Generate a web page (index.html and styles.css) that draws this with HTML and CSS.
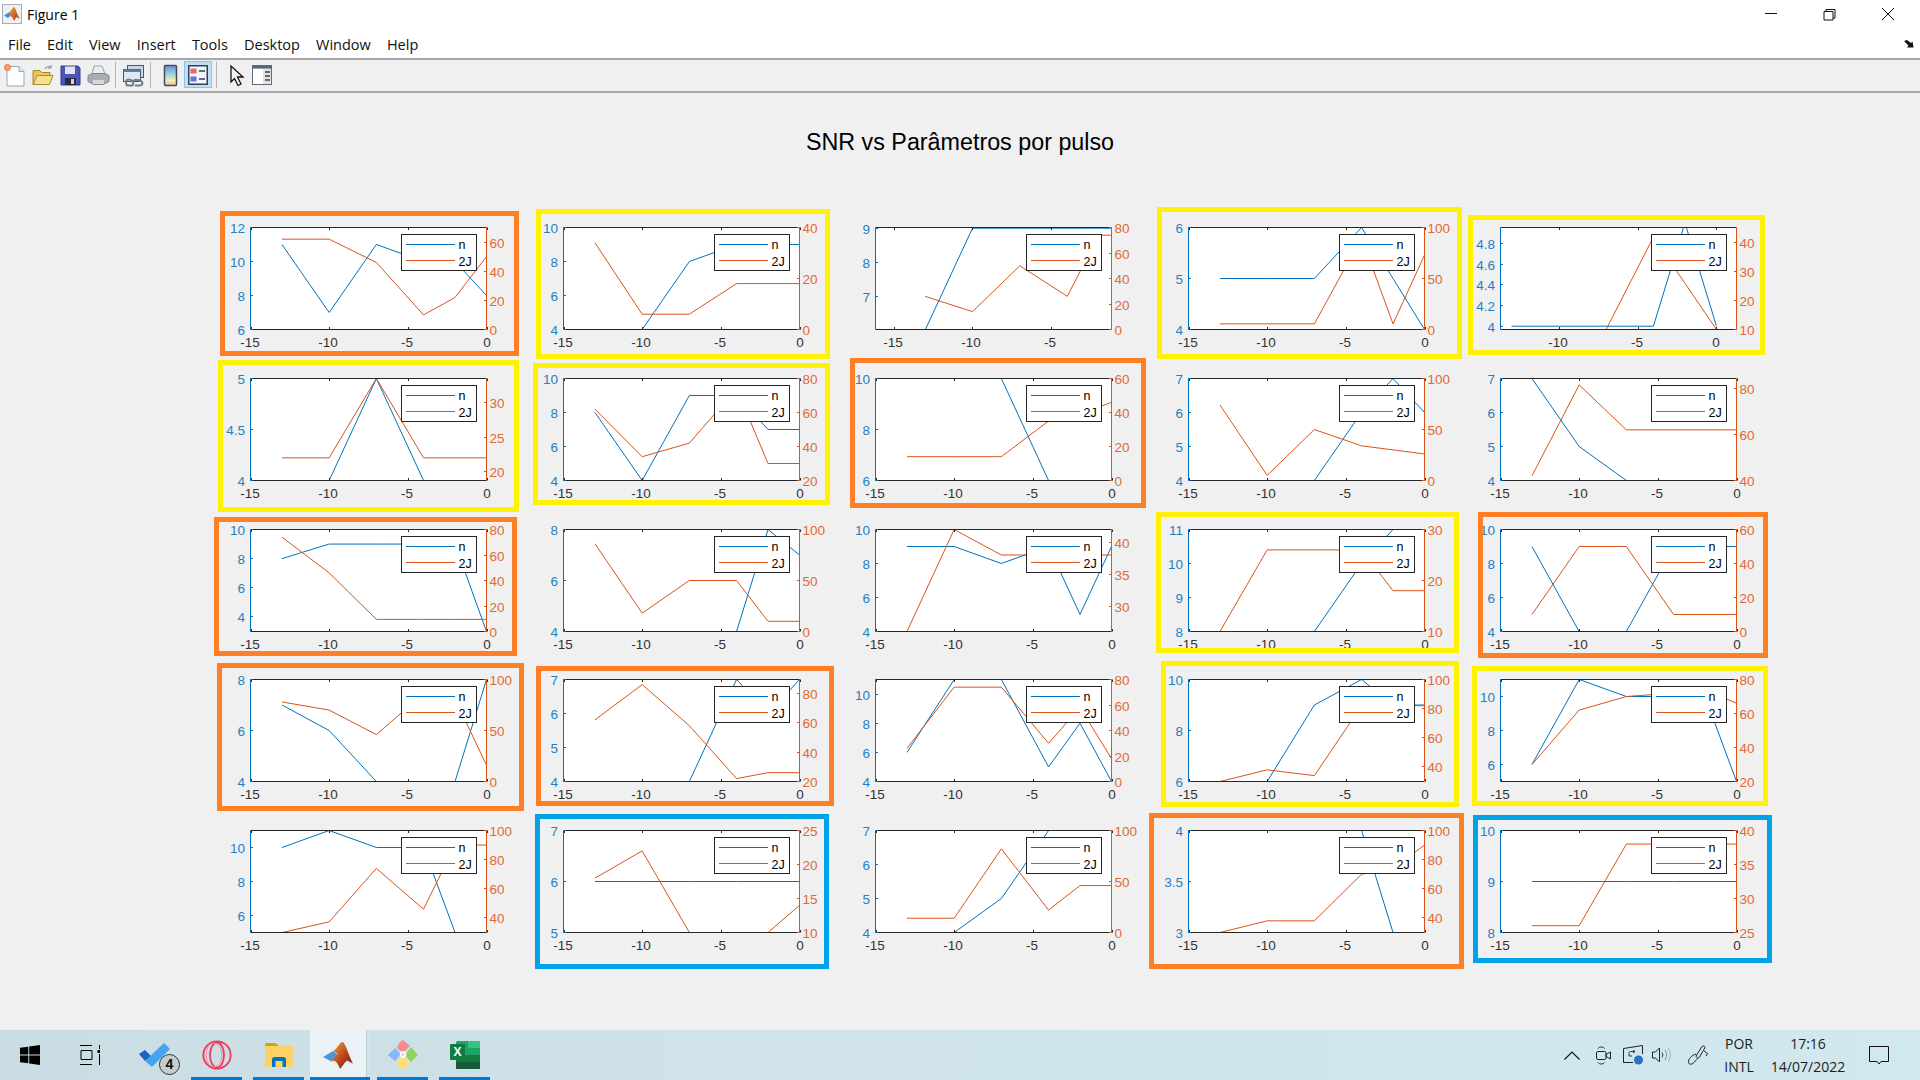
FILE: index.html
```html
<!DOCTYPE html>
<html lang="pt">
<head>
<meta charset="utf-8">
<title>Figure 1</title>
<link rel="stylesheet" href="styles.css">
</head>
<body>
<div class="window">
  <header class="titlebar">
    <svg class="app-icon" width="20" height="20" viewBox="0 0 20 20">
      <defs><linearGradient id="mlA" x1="0" y1="0" x2="1" y2="1"><stop offset="0" stop-color="#f6a13a"/><stop offset="1" stop-color="#a52a12"/></linearGradient></defs>
      <rect x=".5" y=".5" width="19" height="19" fill="#eef1f4" stroke="#a9adb2"/>
      <path d="M2 11.500 7.500 8 10 10 6 14Z" fill="#3f8fcf"/>
      <path d="M7.500 8C9.500 7 10.500 3 12 3 13.500 3 15.500 12 18 15L14.500 13 12 17C11 14 9.500 11.500 7.500 12.500Z" fill="url(#mlA)"/>
    </svg>
    <span class="title-text">Figure 1</span>
    <div class="win-controls">
      <svg class="wc" width="58" height="30" viewBox="0 0 58 30"><path class="wc-line" d="M23 13.500H35"/></svg>
      <svg class="wc" width="58" height="30" viewBox="0 0 58 30"><path class="wc-line" d="M24 11.500h9v8.500h-9zM26 11.500V9.500h9v8.500h-2"/></svg>
      <svg class="wc" width="58" height="30" viewBox="0 0 58 30"><path class="wc-line" d="M24 8 36 20M36 8 24 20"/></svg>
    </div>
  </header>

  <nav class="menubar">
    <span class="menu-item">File</span>
    <span class="menu-item">Edit</span>
    <span class="menu-item">View</span>
    <span class="menu-item">Insert</span>
    <span class="menu-item">Tools</span>
    <span class="menu-item">Desktop</span>
    <span class="menu-item">Window</span>
    <span class="menu-item">Help</span>
    <svg class="dock-arrow" width="10" height="8" viewBox="0 0 10 8"><path d="M0 1 3 0 7 3 8.500 1.500 9.500 7.500 3 7.500 4.500 5.500Z" fill="#111"/></svg>
  </nav>

  <div class="toolbar">
    <svg class="tool" width="24" height="24" viewBox="0 0 24 24">
      <path d="M5 3.500H17L22 8.500V23H5Z" fill="#fff" stroke="#8fa7c4"/><path d="M17 3.500V8.500H22" fill="#dbe6f2" stroke="#8fa7c4"/>
      <circle cx="5.500" cy="4.500" r="3" fill="#f3a36b" stroke="#e8743a"/>
    </svg>
    <svg class="tool" width="24" height="24" viewBox="0 0 24 24">
      <path d="M3 21.500V7.500H10L12 9.500H20V12" fill="#eec65a" stroke="#a78a2e"/>
      <path d="M3 21.500 7 12.500H23L19.500 21.500Z" fill="#f9e08e" stroke="#a78a2e"/>
      <path d="M15 6C16 3.500 19 3 21 4.500M21 2V5H18" fill="none" stroke="#8d9aa8" stroke-width="1.200"/>
    </svg>
    <svg class="tool" width="24" height="24" viewBox="0 0 24 24">
      <path d="M3 3H20L22 5V22H3Z" fill="#4b56b8" stroke="#2f3a8a"/><rect x="7" y="3.500" width="10" height="7.500" fill="#dfe4f5"/>
      <rect x="7" y="15" width="11" height="7" fill="#2a2a38"/><rect x="13" y="16" width="3" height="5" fill="#cfd3de"/>
    </svg>
    <svg class="tool" width="24" height="24" viewBox="0 0 24 24">
      <path d="M8 3H16L19 11H6Z" fill="#e8edf2" stroke="#9ca4ac"/>
      <path d="M2 12.500 6 10.500H19L23 12.500V18.500L17 21.500H8L2 18.500Z" fill="#a9adb1" stroke="#84888c"/>
      <path d="M7 17H18V21H7Z" fill="#d6d8da"/>
    </svg>
    <span class="tool-sep"></span>
    <svg class="tool" width="24" height="24" viewBox="0 0 24 24">
      <rect x="6.500" y="2.500" width="16" height="12" fill="#c9d7e7" stroke="#3a5a80"/>
      <rect x="2.500" y="6.500" width="17" height="12" fill="#dfe8f2" stroke="#3a5a80"/>
      <rect x="2.500" y="6.500" width="17" height="2.500" fill="#5c7fa8"/>
      <path d="M5 19C5 16 9 16 11 18 13 20 13 22.500 10 22.500H7C5.500 22.500 5 21 5 19ZM11 19C12 16.500 17 16.500 20 18 22.500 19.500 21.500 22.500 18.500 22.500H14" fill="none" stroke="#6b7d8f" stroke-width="2"/>
    </svg>
    <span class="tool-sep"></span>
    <svg class="tool tool-bar" width="24" height="24" viewBox="0 0 24 24">
      <defs><linearGradient id="cbG" x1="0" y1="0" x2="0" y2="1"><stop offset="0" stop-color="#6f8fd8"/><stop offset=".45" stop-color="#9fd4d8"/><stop offset=".75" stop-color="#f6edb0"/><stop offset="1" stop-color="#f0b9a0"/></linearGradient></defs>
      <rect x="6.500" y="2.500" width="12" height="20" rx="1" fill="url(#cbG)" stroke="#3d4c63" stroke-width="1.500"/>
    </svg>
    <span class="tool-pressed">
      <svg width="20" height="20" viewBox="0 0 20 20">
        <rect x=".75" y=".75" width="18.500" height="18.500" fill="#f4f6fa" stroke="#2f3f5e" stroke-width="1.500"/>
        <rect x="2.500" y="3.500" width="6" height="5" fill="#e9686a"/><rect x="2.500" y="11.500" width="6" height="5" fill="#6a70d8"/>
        <path d="M11 6H17M11 14H17" stroke="#2f3f5e" stroke-width="1.500"/>
      </svg>
    </span>
    <span class="tool-sep tool-sep-tight"></span>
    <svg class="tool tool-pointer" width="24" height="24" viewBox="0 0 24 24">
      <path d="M7 3V19L10.500 15.500 14 22.500 17 21 13.500 14H19Z" fill="#f4f4f4" stroke="#111" stroke-width="1.300"/>
    </svg>
    <svg class="tool tool-panel" width="24" height="24" viewBox="0 0 24 24">
      <rect x="2.500" y="2.500" width="19" height="19" fill="#dfe1e4" stroke="#5f6b78"/>
      <rect x="2.500" y="2.500" width="19" height="3" fill="#56687c"/>
      <rect x="3" y="6" width="10" height="15" fill="#fff"/>
      <path d="M15 9H20M15 13H20M15 17H20" stroke="#444" stroke-width="1.500"/>
    </svg>
  </div>

  <main class="canvas">
    <h1 class="fig-title">SNR vs Parâmetros por pulso</h1>
    <div id="plots" class="plots"></div>

    <div class="mark orange m1"></div>
    <div class="mark yellow m2"></div>
    <div class="mark yellow m3"></div>
    <div class="mark yellow m4"></div>
    <div class="mark yellow m5"></div>
    <div class="mark yellow m6"></div>
    <div class="mark orange m7"></div>
    <div class="mark orange m8"></div>
    <div class="mark yellow m9"></div>
    <div class="mark orange m10"></div>
    <div class="mark orange m11"></div>
    <div class="mark orange m12"></div>
    <div class="mark yellow m13"></div>
    <div class="mark yellow m14"></div>
    <div class="mark blue m15"></div>
    <div class="mark orange m16"></div>
    <div class="mark blue m17"></div>
  </main>

  <footer class="taskbar">
    <div class="tb-slot s-start">
      <svg width="20" height="20" viewBox="0 0 20 20"><path d="M0 2.800 8.300 1.700V9.500H0ZM9.200 1.500 20 0V9.500H9.200ZM0 10.500H8.300V18.300L0 17.200ZM9.200 10.500H20V20L9.200 18.500Z" fill="#000"/></svg>
    </div>
    <div class="tb-slot s-view">
      <svg width="20" height="20" viewBox="0 0 20 20"><path d="M0 .5H12M0 19.500H12M1 5.500H12V14.500H1ZM19.500 0V4M19.500 9V20" fill="none" stroke="#000"/><rect x="17.500" y="5" width="4" height="3" fill="#000"/></svg>
    </div>
    <div class="tb-slot s-todo">
      <svg width="32" height="26" viewBox="0 0 32 26"><path d="M0 12 6 8 12 14 6 19Z" fill="#1b62c4"/><path d="M6 19 25 1 31 7 13 25Z" fill="#44a5ee"/></svg>
      <span class="badge">4</span>
    </div>
    <div class="tb-slot s-opera run">
      <svg width="32" height="32" viewBox="0 0 32 32"><circle cx="16" cy="16" r="13.700" fill="none" stroke="#f0385c" stroke-width="1.800"/><ellipse cx="16" cy="16" rx="7" ry="12.500" fill="none" stroke="#f0385c" stroke-width="1.800"/><ellipse cx="13" cy="16" rx="8" ry="12" fill="none" stroke="#f58ba0" stroke-width="1"/></svg>
    </div>
    <div class="tb-slot s-files run">
      <svg width="28" height="24" viewBox="0 0 28 24"><path d="M0 1.500C0 .5 1 0 1.500 0H11L14 3H0Z" fill="#e0a100"/><path d="M0 3H28V22.500C28 23.500 27 24 26.500 24H1.500C.5 24 0 23.500 0 22.500Z" fill="#fcd265"/><path d="M7 24V16.500C7 15 8 14 9.500 14H18.500C20 14 21 15 21 16.500V24H17.500V18H10.500V24Z" fill="#0a72c0"/></svg>
    </div>
    <div class="tb-slot s-matlab run">
      <svg width="30" height="27" viewBox="0 0 30 27">
        <defs><linearGradient id="mlB" x1="0" y1="0" x2="1" y2="1"><stop offset="0" stop-color="#f0a040"/><stop offset=".55" stop-color="#b8431b"/><stop offset="1" stop-color="#6e1a10"/></linearGradient></defs>
        <path d="M0 15 10 9 14.500 12.500 8.500 19.500Z" fill="#4a97d2"/>
        <path d="M10 9C13.500 8 16.500 0 19.500 0 22 0 26 14 30 21.500L24 18.500C21.500 20.500 19.500 24 17 27 15 22 12.500 16.500 8.500 19.500L14.500 11.500Z" fill="url(#mlB)"/>
      </svg>
    </div>
    <div class="tb-slot s-kite run">
      <svg width="30" height="30" viewBox="0 0 30 30"><path d="M15 0 22 6 15 13 9 8 11 3Z" fill="#fb8a8f"/><path d="M23 7 30 15 23 22 17 15Z" fill="#8ed45c"/><path d="M8 22 14 16 22 23 15 30Z" fill="#ffdf70"/><path d="M7 8 13 14 7 21 0 15Z" fill="#88b6fb"/><circle cx="15" cy="14.500" r="2.500" fill="none" stroke="#fff" stroke-width="1.500"/></svg>
    </div>
    <div class="tb-slot s-excel run">
      <svg class="xl-tile" width="30" height="28" viewBox="0 0 30 28"><rect x="6" y="0" width="24" height="28" rx="1.500" fill="#21a366"/><rect x="18" y="0" width="12" height="7" fill="#33c481"/><rect x="6" y="7" width="12" height="7" fill="#21a366"/><rect x="18" y="7" width="12" height="7" fill="#21a366"/><rect x="6" y="14" width="12" height="7" fill="#107c41"/><rect x="18" y="14" width="12" height="7" fill="#107c41"/><rect x="6" y="21" width="24" height="7" fill="#185c37"/></svg>
      <span class="xl-x">X</span>
    </div>

    <div class="tray">
      <div class="tr-slot t-chev"><svg width="16" height="9" viewBox="0 0 16 9"><path d="M.5 8.500 8 1 15.500 8.500" fill="none" stroke="#111" stroke-width="1.100"/></svg></div>
      <div class="tr-slot t-meet"><svg width="15" height="19" viewBox="0 0 15 19"><path d="M2 2.500C3.500 .5 7 .5 8.500 2.500M2 16.500C3.500 18.500 7 18.500 8.500 16.500" fill="none" stroke="#222"/><rect x=".5" y="5.500" width="9.500" height="8" rx="1.500" fill="none" stroke="#222"/><path d="M10 8.500 14.500 6V13L10 10.500Z" fill="none" stroke="#222"/></svg></div>
      <div class="tr-slot t-share"><svg width="21" height="20" viewBox="0 0 21 20"><path d="M.5 3.500 19.500.5V9M.5 3.500V17.500H10" fill="none" stroke="#222"/><path d="M6 11V8C6 7 7 6.500 8 6.500H11M6 11H9M10 5 12 6.500 10 8" fill="none" stroke="#222" stroke-width=".9"/><circle cx="15.500" cy="15" r="4.500" fill="#2a71c8"/></svg></div>
      <div class="tr-slot t-sound"><svg width="21" height="16" viewBox="0 0 21 16"><path d="M.5 5H3.500L7.500 1V15L3.500 11H.5Z" fill="none" stroke="#222"/><path d="M10 5.500C11 7 11 9 10 10.500" fill="none" stroke="#333"/><path d="M13 3C15 6 15 10 13 13" fill="none" stroke="#888"/><path d="M16 1C19 5 19 11 16 15" fill="none" stroke="#aaa"/></svg></div>
      <div class="tr-slot t-pen"><svg width="21" height="20" viewBox="0 0 21 20"><path d="M9 11 15 1.500C16 .5 18 1 18 2.500L12.500 12C11.500 14 9.500 13 9 11ZM17 6 20.500 8.500 19 11" fill="none" stroke="#222"/><path d="M9 9C5 10 1 14 1.500 17.500 2 20 5 19.500 7 17.500 9 15 10 14 11 13" fill="none" stroke="#222"/></svg></div>
      <div class="tr-text t-lang"><span>POR</span><span>INTL</span></div>
      <div class="tr-text t-clock"><span>17:16</span><span>14/07/2022</span></div>
      <div class="tr-slot t-notif"><svg width="20" height="19" viewBox="0 0 20 19"><path d="M.5 .5H19.500V15.500H12L10 18 8 15.500H.5Z" fill="none" stroke="#111"/></svg></div>
      <div class="t-end"></div>
    </div>
  </footer>
</div>
<script src="charts.js"></script>
</body>
</html>
```

FILE: styles.css
```css
* { box-sizing: border-box; }
html, body { margin: 0; padding: 0; height: 100%; overflow: hidden; }
body { background: #f0f0f0; font-family: "Open Sans", "Noto Sans", sans-serif; color: #000; }

.window { width: 1920px; height: 1080px; display: flex; flex-direction: column; }

/* title bar */
.titlebar { height: 30px; background: #fff; display: flex; align-items: center; padding-left: 2px; flex: none; }
.app-icon { display: block; margin-top: -2px; }
.title-text { margin-left: 5px; font-size: 14px; margin-top: -2px; }
.win-controls { margin-left: auto; display: flex; padding-right: 4px; }
.wc { display: block; }
.wc-line { fill: none; stroke: #111; stroke-width: 1; }

/* menu */
.menubar { height: 30px; flex: none; background: #fff; border-bottom: 2px solid #a6a6a6; display: flex; align-items: center; padding-left: 8px; gap: 16.100px; font-size: 14.500px; color: #111; position: relative; }
.dock-arrow { position: absolute; right: 6px; top: 10px; }

/* toolbar */
.toolbar { height: 33px; flex: none; background: #f0f0f0; border-bottom: 2px solid #a6a6a6; display: flex; align-items: center; gap: 4px; padding-left: 2px; padding-bottom: 2px; }
.tool { display: block; flex: none; }
.tool-sep { width: 1px; height: 26px; background: #b4b4b4; margin: 0 1px; flex: none; }
.tool-sep-tight { margin-left: 0; }
.tool-bar { margin-left: 2px; }
.tool-pointer { margin-left: 2px; }
.tool-panel { margin-left: -2px; }
.tool-pressed { width: 28px; height: 27px; margin-left: -2px; background: #bfdff7; border: 1px solid #8cc3ec; display: flex; align-items: center; justify-content: center; flex: none; }
.tool-pressed svg { display: block; }

/* figure */
.canvas { flex: 1; position: relative; background: #f0f0f0; padding: 34px 0 0 250px; min-height: 0; }
.fig-title { margin: 0 0 0 -250px; height: 30px; text-align: center; font: 400 23.300px/30px "Liberation Sans", Arial, sans-serif; color: #000; }
.plots { margin-top: 70px; display: grid; grid-template-columns: repeat(5, 236px); grid-auto-rows: 102px; column-gap: 76.500px; row-gap: 48.750px; }
.plot { display: block; overflow: visible; }

.plot-bg { fill: #fff; }
.axis-x { stroke: #262626; stroke-width: 1; fill: none; }
.axis-l { stroke: #0072bd; stroke-width: 1; fill: none; }
.axis-r { stroke: #d95319; stroke-width: 1; fill: none; }
.serie { fill: none; stroke-width: 1; stroke-linejoin: round; }
.serie-n { stroke: #0072bd; }
.serie-j { stroke: #d95319; }
.lbl { font-family: "Liberation Sans", Arial, sans-serif; font-size: 13.500px; }
.lbl-x { fill: #333; text-anchor: middle; }
.lbl-l { fill: #1f80c4; text-anchor: end; }
.lbl-r { fill: #df6a35; text-anchor: start; }
.leg-box { fill: #fff; stroke: #262626; stroke-width: 1; }
.leg-text { font-family: "Liberation Sans", Arial, sans-serif; font-size: 12.500px; fill: #000; }

/* hand-drawn rectangles over the figure */
.mark { position: absolute; border: 5px solid; pointer-events: none; }
.orange { border-color: #ff7f27; }
.yellow { border-color: #fff200; }
.blue { border-color: #00a2e8; }
.m1 { left: 220px; top: 118px; width: 299px; height: 145px; }
.m2 { left: 536px; top: 116px; width: 294px; height: 150px; }
.m3 { left: 1157px; top: 114px; width: 305px; height: 152px; }
.m4 { left: 1468px; top: 122px; width: 297px; height: 140px; }
.m5 { left: 218px; top: 267px; width: 301px; height: 152px; }
.m6 { left: 533px; top: 270px; width: 297px; height: 142px; }
.m7 { left: 850px; top: 265px; width: 296px; height: 150px; }
.m8 { left: 214px; top: 424px; width: 303px; height: 139px; }
.m9 { left: 1156px; top: 419px; width: 303px; height: 141px; }
.m10 { left: 1478px; top: 419px; width: 290px; height: 146px; }
.m11 { left: 217px; top: 570px; width: 307px; height: 148px; }
.m12 { left: 536px; top: 573px; width: 298px; height: 140px; }
.m13 { left: 1161px; top: 568px; width: 298px; height: 146px; }
.m14 { left: 1472px; top: 573px; width: 296px; height: 140px; }
.m15 { left: 535px; top: 721px; width: 294px; height: 155px; }
.m16 { left: 1149px; top: 720px; width: 315px; height: 156px; }
.m17 { left: 1473px; top: 722px; width: 299px; height: 148px; }

/* taskbar */
.taskbar { height: 50px; flex: none; display: flex; background: linear-gradient(90deg, #c9dde3 0%, #cfe3e8 40%, #d0e8ee 100%); position: relative; }
.tb-slot { height: 50px; display: flex; align-items: center; justify-content: center; position: relative; flex: none; }
.tb-slot svg { display: block; }
.run { border-bottom: 3px solid #0078d7; padding-top: 3px; }
.s-start { width: 60px; }
.s-view { width: 60px; }
.s-todo { width: 71px; justify-content: flex-start; padding-left: 19px; }
.s-opera { width: 51px; }
.s-files { width: 51px; margin-left: 11px; }
.s-matlab { width: 60px; margin-left: 6px; background: linear-gradient(90deg, #eaf2f5 0, #eaf2f5 56px, #b9cfd8 56px, #b9cfd8 57px, #cfe3e8 57px); padding-right: 4px; }
.s-kite { width: 51px; margin-left: 7px; }
.s-excel { width: 51px; margin-left: 11px; }
.badge { position: absolute; left: 39px; top: 24px; width: 21px; height: 21px; border-radius: 50%; background: #c6cdd0; border: 1px solid #333; font: 700 14px/19px "Liberation Sans", sans-serif; text-align: center; color: #111; }
.xl-x { position: absolute; left: 11px; top: 14px; width: 15px; height: 16px; background: #107c41; color: #fff; font: 700 12px/16px "Liberation Sans", sans-serif; text-align: center; border-radius: 1px; }

.tray { position: absolute; right: 0; top: 0; height: 50px; display: flex; align-items: center; }
.tr-slot { height: 50px; display: flex; align-items: center; justify-content: center; flex: none; }
.tr-slot svg { display: block; }
.t-chev { width: 30px; }
.t-meet { width: 32px; }
.t-share { width: 28px; }
.t-sound { width: 30px; }
.t-pen { width: 40px; }
.t-notif { width: 48px; }
.t-end { width: 17px; height: 50px; position: relative; }
.tr-text { height: 50px; display: flex; flex-direction: column; align-items: center; justify-content: center; font-size: 14px; line-height: 23px; color: #1c1c1c; flex: none; }
.t-lang { width: 44px; }
.t-clock { width: 94px; }
```

FILE: charts.js
```js
// Each entry: x limits, left axis [min, max, ticks], right axis [min, max, ticks], n values, 2J values.
var XS = [-13, -10, -7, -4, -2, 0];
var F = [-15, 0];
var CHARTS = [
  [F, [6, 12, [6, 8, 10, 12]], [0, 70, [0, 20, 40, 60]], [11, 7, 11, 10, 10, 8], [62, 62, 46, 10, 22, 50]],
  [F, [4, 10, [4, 6, 8, 10]], [0, 40, [0, 20, 40]], [4, 4, 8, 9, 9, 9], [34, 6, 6, 18, 18, 18]],
  [[-16.14, -1.2], [6.02, 9.02, [7, 8, 9]], [0, 80, [0, 20, 40, 60, 80]], [6, 9, 9, 9, 9, 9], [26, 14, 50, 26, 74, 74]],
  [F, [4, 6, [4, 5, 6]], [0, 100, [0, 50, 100]], [5, 5, 5, 6, 5, 4], [5.5, 5.5, 5.5, 90, 5.5, 73]],
  [[-13.7, 1.27], [3.968, 4.955, [4, 4.2, 4.4, 4.6, 4.8]], [10, 45.3, [10, 20, 30, 40]], [4, 4, 4, 4, 5, 4], [10, 10, 10, 42, 26, 10]],

  [F, [4, 5, [4, 4.5, 5]], [18.7, 33.55, [20, 25, 30]], [4, 4, 5, 4, 4, 4], [22, 22, 33.55, 22, 22, 22]],
  [F, [4, 10, [4, 6, 8, 10]], [20, 80, [20, 40, 60, 80]], [8, 4, 9, 9, 7, 7], [62, 34, 42, 74, 30, 30]],
  [F, [6, 10, [6, 8, 10]], [0, 60, [0, 20, 40, 60]], [10, 10, 10, 6, 6, 6], [14, 14, 14, 35, 39, 46]],
  [F, [4, 7, [4, 5, 6, 7]], [0, 100, [0, 50, 100]], [4, 4, 4, 6, 7, 6], [74, 5, 50, 34, 30, 26]],
  [F, [4, 7, [4, 5, 6, 7]], [40, 84.3, [40, 60, 80]], [7, 5, 4, 4, 4, 4], [42, 81.5, 62, 62, 62, 62]],

  [F, [3, 10, [4, 6, 8, 10]], [0, 80, [0, 20, 40, 60, 80]], [8, 9, 9, 9, 9, 3], [74, 46, 9.5, 9.5, 9.5, 9.5]],
  [F, [4, 8, [4, 6, 8]], [0, 100, [0, 50, 100]], [4, 4, 4, 4, 8, 7], [86, 18, 50, 50, 10, 10]],
  [F, [4, 10, [4, 6, 8, 10]], [26, 42, [30, 35, 40]], [9, 9, 8, 9, 5, 9], [26, 42, 38, 38, 38, 38]],
  [F, [8, 11, [8, 9, 10, 11]], [10, 30, [10, 20, 30]], [8, 8, 8, 10, 11, 11], [10, 26, 26, 26, 18, 18]],
  [F, [4, 10, [4, 6, 8, 10]], [0, 60, [0, 20, 40, 60]], [9, 4, 4, 9, 9, 9], [10, 50, 50, 10, 10, 10]],

  [F, [4, 8, [4, 6, 8]], [0, 100, [0, 50, 100]], [7, 6, 4, 4, 4, 8], [78, 70, 46, 86, 81, 16]],
  [F, [4, 7, [4, 5, 6, 7]], [20, 89.5, [20, 40, 60, 80]], [4, 4, 4, 7, 6, 7], [62, 86, 58, 22, 26, 26]],
  [F, [4, 11, [4, 6, 8, 10]], [0, 80, [0, 20, 40, 60, 80]], [6, 11, 11, 5, 8, 4], [26, 74, 74, 30, 58, 18]],
  [F, [6, 10, [6, 8, 10]], [30, 100, [40, 60, 80, 100]], [6, 6, 9, 10, 9, 9], [30, 38, 34, 82, 82, 82]],
  [F, [5, 11, [6, 8, 10]], [20, 80, [20, 40, 60, 80]], [6, 11, 10, 10, 10, 5], [30, 62, 70, 72, 74, 66]],

  [F, [5, 11, [6, 8, 10]], [30, 100, [40, 60, 80, 100]], [10, 11, 10, 10, 5, 5], [30, 37.3, 74, 46, 90, 90]],
  [F, [5, 7, [5, 6, 7]], [10, 25, [10, 15, 20, 25]], [6, 6, 6, 6, 6, 6], [18, 22, 10, 10, 10, 14]],
  [F, [4, 7, [4, 5, 6, 7]], [0, 100, [0, 50, 100]], [4, 4, 5, 7, 7, 7], [14, 14, 82, 22, 46, 46]],
  [F, [3, 4, [3, 3.5, 4]], [30, 100, [40, 60, 80, 100]], [4, 4, 4, 4, 3, 3], [30, 38, 38, 70, 74, 90]],
  [F, [8, 10, [8, 9, 10]], [25, 40, [25, 30, 35, 40]], [9, 9, 9, 9, 9, 9], [26, 26, 38, 38, 38, 38]]
];

var W = 236, H = 102, TICK = 2.5;

function chart(c, index) {
  var xl = c[0], L = c[1], R = c[2];
  var px = function (x) { return ((x - xl[0]) / (xl[1] - xl[0])) * W + 0.5; };
  var py = function (a, v) { return H + 0.5 - ((v - a[0]) / (a[1] - a[0])) * H; };
  var out = [];
  var clip = 'clip' + index;
  out.push('<defs><clipPath id="' + clip + '"><rect x="0" y="0" width="' + (W + 1) + '" height="' + (H + 1) + '"/></clipPath></defs>');
  out.push('<rect class="plot-bg" x="0.5" y="0.5" width="' + W + '" height="' + H + '"/>');

  var line = function (a, vals, cls) {
    var pts = vals.map(function (v, i) { return px(XS[i]).toFixed(2) + ',' + py(a, v).toFixed(2); }).join(' ');
    return '<polyline class="serie ' + cls + '" clip-path="url(#' + clip + ')" points="' + pts + '"/>';
  };
  out.push(line(L, c[3], 'serie-n'));
  out.push(line(R, c[4], 'serie-j'));

  var d = 'M0.5 0.5H' + (W + 0.5) + 'M0.5 ' + (H + 0.5) + 'H' + (W + 0.5);
  [-15, -10, -5, 0].forEach(function (t) {
    if (t < xl[0] || t > xl[1]) return;
    var x = Math.round(px(t)) + 0.5;
    d += 'M' + x + ' 0.5v' + TICK + 'M' + x + ' ' + (H + 0.5) + 'v-' + TICK;
    out.push('<text class="lbl lbl-x" x="' + (x - (t < 0 ? 1.5 : 0.5)) + '" y="' + (H + 18) + '">' + t + '</text>');
  });
  out.push('<path class="axis-x" d="' + d + '"/>');

  var dl = 'M0.5 0.5V' + (H + 0.5);
  L[2].forEach(function (t) {
    var y = Math.round(py(L, t) - 0.5) + 0.5;
    dl += 'M0.5 ' + y + 'h' + TICK;
    out.push('<text class="lbl lbl-l" x="-5" y="' + (y + 5.5) + '">' + t + '</text>');
  });
  out.push('<path class="axis-l" d="' + dl + '"/>');

  var dr = 'M' + (W + 0.5) + ' 0.5V' + (H + 0.5);
  R[2].forEach(function (t) {
    var y = Math.round(py(R, t) - 0.5) + 0.5;
    dr += 'M' + (W + 0.5) + ' ' + y + 'h-' + TICK;
    out.push('<text class="lbl lbl-r" x="' + (W + 3.5) + '" y="' + (y + 5.5) + '">' + t + '</text>');
  });
  out.push('<path class="axis-r" d="' + dr + '"/>');

  out.push('<rect class="leg-box" x="151.5" y="7.5" width="75" height="36"/>');
  out.push('<line class="serie serie-n" x1="156" x2="205" y1="17.5" y2="17.5"/>');
  out.push('<line class="serie serie-j" x1="156" x2="205" y1="33.5" y2="33.5"/>');
  out.push('<text class="leg-text" x="208.5" y="22">n</text>');
  out.push('<text class="leg-text" x="208.5" y="39">2J</text>');

  return '<svg class="plot" width="' + (W + 1) + '" height="' + (H + 1) + '" viewBox="0 0 ' + (W + 1) + ' ' + (H + 1) + '">' + out.join('') + '</svg>';
}

document.getElementById('plots').innerHTML = CHARTS.map(chart).join('');
```
